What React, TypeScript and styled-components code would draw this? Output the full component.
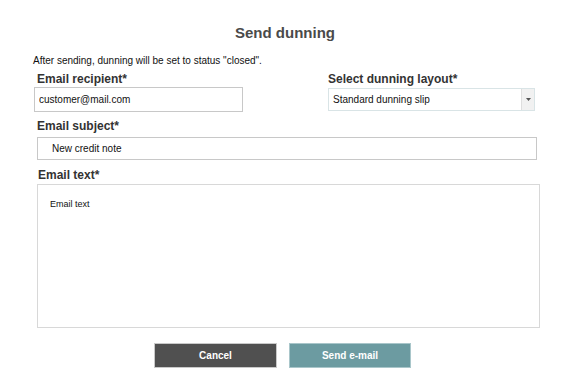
import React from 'react';
import styled, {createGlobalStyle} from "styled-components";

const GlobalStyle = createGlobalStyle`
  html, body {
    margin: 0;
    padding: 0;
    background: #ffffff;
  }
  body {
    font-family: "Liberation Sans", Arial, Helvetica, sans-serif;
  }
`

export default function App() {
    return (
        <>
            <GlobalStyle/>
            <Dialog>
                <Title>Send dunning</Title>
                <Note>After sending, dunning will be set to status "closed".</Note>
                <FieldRow>
                    <Field width="209px" inset="1px">
                        <Label indent="3px">Email recipient*</Label>
                        <TextInput height="25px" readOnly value="customer@mail.com" pad="4px"/>
                    </Field>
                    <Field width="207px" outset="2px">
                        <Label>Select dunning layout*</Label>
                        <SelectBox>
                            <SelectValue>Standard dunning slip</SelectValue>
                            <SelectArrow>
                                <svg width="5" height="3" viewBox="0 0 5 3">
                                    <path d="M0 0 H5 L2.5 3 Z" fill="#555"/>
                                </svg>
                            </SelectArrow>
                        </SelectBox>
                    </Field>
                </FieldRow>
                <Field inset="4px" gap="4px" top="7px">
                    <Label indent="0">Email subject*</Label>
                    <TextInput height="23px" readOnly value="New credit note" pad="14px"/>
                </Field>
                <Field inset="4px" outset="-3px" gap="2px" top="8px">
                    <Label indent="1px">Email text*</Label>
                    <TextArea readOnly value="Email text"/>
                </Field>
                <Actions>
                    <Button variant="dark">Cancel</Button>
                    <Button variant="teal">Send e-mail</Button>
                </Actions>
            </Dialog>
        </>
    );
}

const Dialog = styled.div`
  width: 568px;
  box-sizing: border-box;
  padding: 24px 31px 0 33px;
  display: flex;
  flex-direction: column;
`
const Title = styled.h1`
  margin: 0;
  font-size: 15px;
  line-height: 18px;
  font-weight: bold;
  color: #4a4a4a;
  text-align: center;
`
const Note = styled.p`
  margin: 13px 0 0;
  font-size: 10px;
  line-height: 12px;
  color: #111;
`
const FieldRow = styled.div`
  display: flex;
  justify-content: space-between;
  margin-top: 5px;
`
const Field = styled.div<{ width?: string; inset?: string; outset?: string; gap?: string; top?: string }>`
  display: flex;
  flex-direction: column;
  gap: ${p => p.gap ?? '1px'};
  width: ${p => p.width ?? 'auto'};
  margin-left: ${p => p.inset ?? '0'};
  margin-right: ${p => p.outset ?? '0'};
  margin-top: ${p => p.top ?? '0'};
`
const Label = styled.label<{ indent?: string }>`
  font-size: 12px;
  line-height: 14px;
  font-weight: bold;
  color: #333;
  padding-left: ${p => p.indent ?? '0'};
`
const TextInput = styled.input<{ height: string; pad: string }>`
  box-sizing: border-box;
  width: 100%;
  height: ${p => p.height};
  border: 1px solid #c8c8c8;
  padding: 0 ${p => p.pad};
  font-family: "Liberation Sans", Arial, sans-serif;
  font-size: 10px;
  color: #111;
  background: #fff;
  outline: none;
`
const SelectBox = styled.div`
  box-sizing: border-box;
  display: flex;
  height: 23px;
  margin-top: 1px;
  border: 1px solid #d9e4e6;
  background: #fff;
`
const SelectValue = styled.span`
  flex: 1;
  display: flex;
  align-items: center;
  padding-left: 4px;
  font-size: 10px;
  color: #111;
`
const SelectArrow = styled.span`
  width: 12px;
  display: flex;
  align-items: center;
  justify-content: center;
  background: #f1f1f1;
  border-left: 1px solid #dedede;
`
const TextArea = styled.textarea`
  box-sizing: border-box;
  width: 100%;
  height: 144px;
  border: 1px solid #d8d8d8;
  padding: 14px 12px;
  resize: none;
  font-family: "Liberation Sans", Arial, sans-serif;
  font-size: 9px;
  color: #111;
  outline: none;
`
const Actions = styled.div`
  display: flex;
  justify-content: center;
  gap: 12px;
  margin-top: 15px;
  padding-right: 5px;
`
const Button = styled.button<{ variant: 'dark' | 'teal' }>`
  box-sizing: border-box;
  width: ${p => p.variant === 'dark' ? '123px' : '122px'};
  height: 25px;
  border: 1px solid ${p => p.variant === 'dark' ? '#c9c9c9' : '#a9c6ca'};
  background: ${p => p.variant === 'dark' ? '#505050' : '#6c9ba1'};
  color: #fff;
  font-family: "Liberation Sans", Arial, sans-serif;
  font-size: 10px;
  font-weight: bold;
  cursor: pointer;
`
